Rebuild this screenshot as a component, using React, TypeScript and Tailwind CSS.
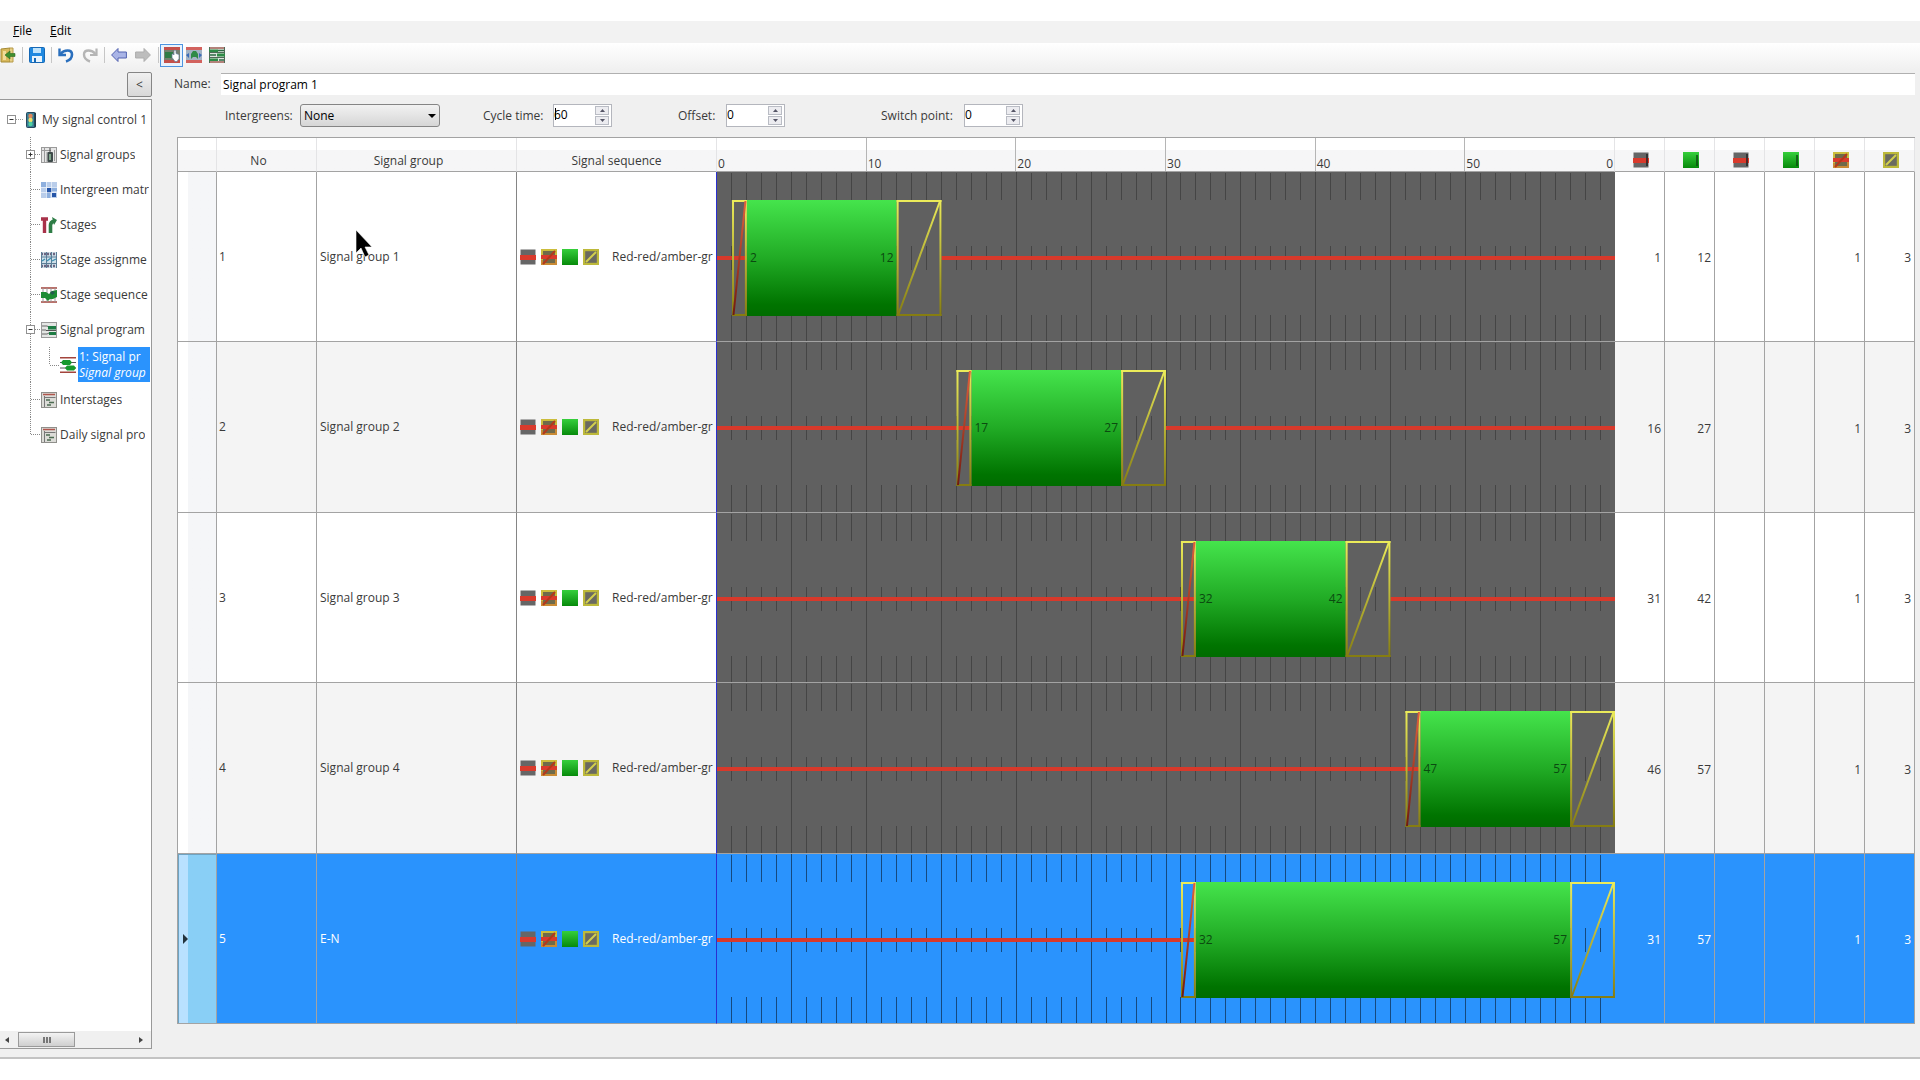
import { ReactNode } from "react";
import clsx from "clsx";

const CYCLE = 60;
const BAR_TOP = 28;
const BAR_BOTTOM = 144;

type Group = { no: number; name: string; start: number; green: number; end: number; amberEnd: number };

const groups: Group[] = [
  { no: 1, name: "Signal group 1", start: 1, green: 2, end: 12, amberEnd: 15 },
  { no: 2, name: "Signal group 2", start: 16, green: 17, end: 27, amberEnd: 30 },
  { no: 3, name: "Signal group 3", start: 31, green: 32, end: 42, amberEnd: 45 },
  { no: 4, name: "Signal group 4", start: 46, green: 47, end: 57, amberEnd: 60 },
  { no: 5, name: "E-N", start: 31, green: 32, end: 57, amberEnd: 60 },
];

const pct = (t: number) => `${(t / CYCLE) * 100}%`;

function Icon({ children }: { children: ReactNode }) {
  return (
    <svg viewBox="0 0 16 16" className="size-4 shrink-0" aria-hidden="true">
      {children}
    </svg>
  );
}

/* signal state icons */

function RedIcon({ edge }: { edge?: boolean }) {
  return (
    <Icon>
      <rect x="0.5" y="0.5" width="15" height="15" fill="#666" />
      <rect x="0" y="6" width="16" height="5" fill="#d93a2c" />
      {edge && <path d="M14 2v12" stroke="#222" strokeWidth="1.5" />}
    </Icon>
  );
}

function RedAmberIcon() {
  return (
    <Icon>
      <rect x="1" y="1" width="14" height="14" fill="#6f6a4a" stroke="#ccbd3c" strokeWidth="2" />
      <path d="M15 6v9H1v-4" fill="none" stroke="#c98a34" strokeWidth="2" />
      <rect x="0" y="6" width="16" height="4" fill="#d93a2c" />
      <path d="M2 15L14 2" stroke="#b5381c" strokeWidth="2" />
    </Icon>
  );
}

function GreenIcon({ edge }: { edge?: boolean }) {
  return (
    <Icon>
      <defs>
        <linearGradient id="greenIcon" x1="0" y1="0" x2="0" y2="1">
          <stop offset="0" stopColor="#35cf3b" />
          <stop offset="1" stopColor="#078a0b" />
        </linearGradient>
      </defs>
      <rect width="16" height="16" fill="url(#greenIcon)" />
      {edge && <path d="M14 3v11" stroke="#0b4a10" strokeWidth="1.5" />}
    </Icon>
  );
}

function AmberIcon() {
  return (
    <Icon>
      <rect x="1" y="1" width="14" height="14" fill="#6a6a60" stroke="#bdb93a" strokeWidth="2.4" />
      <path d="M3 13L13 3" stroke="#d2cf4c" strokeWidth="2" />
    </Icon>
  );
}

/* toolbar icons */

function ExitIcon() {
  return (
    <Icon>
      <path d="M1 2l9-1v14l-9 0z" fill="#d9b95c" stroke="#a58a35" />
      <path d="M10 1h3v14h-3" fill="#e6cf85" stroke="#b79a48" />
      <path d="M3 4h3v9H3z" fill="#f0dc98" />
      <path d="M5 8l5-4v2.500h5v3h-5V12z" fill="#3f8f2f" stroke="#2c6b22" strokeWidth="0.6" />
    </Icon>
  );
}

function SaveIcon() {
  return (
    <Icon>
      <rect x="0.5" y="0.5" width="15" height="15" rx="1" fill="#2089e0" stroke="#1668b5" />
      <rect x="4" y="1" width="8" height="5" fill="#bfe3fb" />
      <rect x="3" y="9" width="10" height="6" fill="#e9f4fc" />
      <rect x="5" y="11" width="2" height="4" fill="#1668b5" />
    </Icon>
  );
}

function UndoIcon() {
  return (
    <Icon>
      <path d="M2.500 7C6 2.500 14 2 14 7.500C14 11 11 13.500 8 14.500" fill="none" stroke="#2a6fbd" strokeWidth="2.6" />
      <path d="M1.500 1.500V8H8" fill="none" stroke="#2a6fbd" strokeWidth="2.4" />
    </Icon>
  );
}

function RedoIcon() {
  return (
    <Icon>
      <path d="M13.500 7C10 2.500 2 2 2 7.500C2 11 5 13.500 8 14.500" fill="none" stroke="#b5b5b5" strokeWidth="2.4" />
      <path d="M14.500 1.500V8H8" fill="none" stroke="#b5b5b5" strokeWidth="2.2" />
    </Icon>
  );
}

function BackIcon() {
  return (
    <Icon>
      <path d="M0.600 8L7 1.500V5h8.400v6H7v3.500z" fill="#a9b4e6" stroke="#5262b0" />
    </Icon>
  );
}

function ForwardIcon() {
  return (
    <Icon>
      <path d="M15.400 8L9 1.500V5H0.600v6H9v3.500z" fill="#bdbdbd" stroke="#adadad" />
    </Icon>
  );
}

function ProgramViewIcon() {
  return (
    <Icon>
      <rect width="16" height="16" fill="#75806f" />
      <path d="M0 1.500h16M0 14.500h16" stroke="#c4504a" strokeWidth="3" />
      <rect x="1" y="5" width="8" height="6" fill="#2e7d46" />
      <path d="M8 7l1 0 1 1V3.500l1-0.500 1 0.500v3l3 1v4l-2 3h-2l-3-4z" fill="#fff" stroke="#66809c" strokeWidth="0.7" />
    </Icon>
  );
}

function StageViewIcon() {
  return (
    <Icon>
      <rect width="16" height="16" fill="#a3b3c4" />
      <path d="M0 1.500h16M0 14.500h16" stroke="#d2625e" strokeWidth="3" />
      <path d="M5 12V7l2-3h3l2 3v5l-2-2H7z" fill="#2e8b46" />
      <path d="M0 8l3-2v5zM16 8l-3-2v5z" fill="#3a6cb8" />
    </Icon>
  );
}

function SplitViewIcon() {
  return (
    <Icon>
      <rect width="16" height="16" fill="#dfe7df" />
      <path d="M0 1h16M0 15h16" stroke="#a5625a" strokeWidth="1.500" />
      <path d="M0.500 0v16M15.500 0v16M0 5.500h16M0 10.500h16" stroke="#4f6a57" />
      <path d="M0 2.500h9v2.500H0zM8 6.500h8v3H8zM0 11.500h9v2.500H0z" fill="#2e8b46" />
      <path d="M9 3.500h6M1 8h6M10 13h5" stroke="#2e6b46" strokeWidth="1.400" />
    </Icon>
  );
}

/* tree icons */

function ControllerIcon() {
  return (
    <svg viewBox="0 0 10 16" className="h-4 w-[10px] shrink-0" aria-hidden="true">
      <rect x="0.5" y="0.5" width="9" height="15" rx="1" fill="#3a7f96" stroke="#28485c" />
      <path d="M9 1v14" stroke="#1f3340" strokeWidth="1.500" />
      <circle cx="4.500" cy="4" r="2.2" fill="#e0865a" />
      <circle cx="4.500" cy="8" r="2.2" fill="#efe06a" />
      <circle cx="4.500" cy="12" r="2.2" fill="#4fd0a0" />
    </svg>
  );
}

function SignalGroupsIcon() {
  return (
    <Icon>
      <rect x="0.5" y="0.5" width="15" height="15" fill="#e6e6e6" stroke="#9a9a9a" />
      <path d="M0 3.500h10M3.500 1v14M6 5v10M13.500 3v11" stroke="#9a9a9a" />
      <rect x="6.500" y="5" width="5.500" height="10" rx="1" fill="#3e4a4a" />
      <rect x="8" y="7" width="2" height="6" fill="#7fa58a" />
      <path d="M9 1v4" stroke="#444" />
    </Icon>
  );
}

function MatrixIcon() {
  return (
    <Icon>
      <rect width="16" height="16" fill="#b9cdea" />
      <path d="M0 0h5v5H0zM10 5h6v4h-6zM5 11h4v5H5z" fill="#8fb0de" />
      <path d="M6 6h5v5H6zM11 11h4v4h-4z" fill="#2555a8" />
      <path d="M0 5.500h16M0 10.500h16M5.500 0v16M10.500 0v16" stroke="#f2f6fc" strokeWidth="0.7" />
    </Icon>
  );
}

function StagesIcon() {
  return (
    <Icon>
      <path d="M0 2h7M3.500 2v14" stroke="#a8324a" strokeWidth="3.4" />
      <path d="M9.500 16V8q0-3 4-4" fill="none" stroke="#2e7d46" strokeWidth="3.6" />
      <path d="M11 0l5 3-3 5z" fill="#2e7d46" />
    </Icon>
  );
}

function AssignmentIcon() {
  return (
    <Icon>
      <rect width="16" height="16" fill="#cfe0ea" />
      <path d="M0 2h16M0 14h16" stroke="#6d6480" strokeWidth="2.500" strokeDasharray="2 1" />
      <path d="M0.500 0v16M5.500 0v16M10.500 0v16M15.500 0v16M0 5h16M0 11.500h16" stroke="#5b7d97" />
      <path d="M1 9l3-2M6 9l4-3M11 9l4-2" stroke="#3a8fb0" strokeWidth="1.300" />
    </Icon>
  );
}

function SequenceIcon() {
  return (
    <Icon>
      <path d="M0 1h16M0 15h16" stroke="#a3443c" strokeWidth="1.500" />
      <path d="M2 1v14M6 1v14M10 1v14M14 1v14" stroke="#999" />
      <path d="M0 5h5l3 2 3-3 5-1v7l-4 2H9l-2 2-3-3H0z" fill="#1d8c34" />
      <path d="M9 5l3-1 2 2-3 2z" fill="#245c4e" />
    </Icon>
  );
}

function ProgramsIcon() {
  return (
    <Icon>
      <rect x="0.5" y="0.5" width="15" height="15" fill="#e4e6e4" stroke="#999" />
      <path d="M1 4h5l2 1M1 8h4M1 12h5l2-1" stroke="#666" fill="none" />
      <path d="M7 4h8v3.500H7zM8 10h7v3H8z" fill="#1d7c44" />
      <path d="M5 8.500h10" stroke="#555" />
    </Icon>
  );
}

function ProgramIcon() {
  return (
    <Icon>
      <path d="M0 0.800h16M0 15.200h16" stroke="#a3443c" strokeWidth="1.500" />
      <path d="M0 5.500h16M0 11h16" stroke="#555" />
      <path d="M1 5.500l2-2.500h7l2 2.500-2 2.500H3zM5 11l2-2.500h7l2 2.500-2 2.500H7z" fill="#169a2c" />
    </Icon>
  );
}

function InterstageIcon() {
  return (
    <Icon>
      <rect x="0.5" y="0.5" width="15" height="15" fill="#dcdcd8" stroke="#8f8f8b" />
      <path d="M2 2.500h12" stroke="#b0554c" strokeWidth="1.500" />
      <path d="M3.500 4v11M3.500 5.500h11" stroke="#777" />
      <path d="M5 8h4M8 10.500h5M6 13h4" stroke="#4c6b52" strokeWidth="1.500" />
    </Icon>
  );
}

const tree = [
  { label: "Signal groups", icon: <SignalGroupsIcon />, expander: "+" },
  { label: "Intergreen matr", icon: <MatrixIcon /> },
  { label: "Stages", icon: <StagesIcon /> },
  { label: "Stage assignme", icon: <AssignmentIcon /> },
  { label: "Stage sequence", icon: <SequenceIcon /> },
  { label: "Signal program", icon: <ProgramsIcon />, expander: "-" },
  { label: "1: Signal pr", sub: "Signal group", icon: <ProgramIcon />, selected: true },
  { label: "Interstages", icon: <InterstageIcon /> },
  { label: "Daily signal pro", icon: <InterstageIcon />, last: true },
];

function Expander({ x, sign }: { x: number; sign: string }) {
  return (
    <g>
      <rect x={x - 4} y="13.5" width="8" height="8" fill="#fff" stroke="#919191" />
      <path d={`M${x - 2} 17.5h4`} stroke="#333" />
      {sign === "+" && <path d={`M${x} 15.500v4`} stroke="#333" />}
    </g>
  );
}

function Tree() {
  return (
    <ul className="flex-1 pt-[2px]">
      <li className="flex h-[35px] items-center">
        <svg className="h-[35px] w-[26px] shrink-0" aria-hidden="true">
          <path d="M16 17.5h7" stroke="#999" strokeDasharray="1 1" />
          <Expander x={11.5} sign="-" />
        </svg>
        <ControllerIcon />
        <span className="ml-[6px]">My signal control 1</span>
      </li>
      {tree.map((item) => (
        <li key={item.label} className="flex h-[35px] items-center">
          <svg className={clsx("h-[35px] shrink-0", item.selected ? "w-[60px]" : "w-[41px]")} aria-hidden="true">
            <path d={item.last ? "M30.5 0v18" : "M30.5 0v35"} stroke="#888" strokeDasharray="1 1" />
            {item.selected ? (
              <path d="M49.5 0v18M50 18.5h9" stroke="#888" strokeDasharray="1 1" fill="none" />
            ) : (
              <path d="M31 17.500h10" stroke="#888" strokeDasharray="1 1" />
            )}
            {item.expander && <Expander x={30.5} sign={item.expander} />}
          </svg>
          {item.icon}
          {item.selected ? (
            <span className="ml-[2px] flex h-[35px] w-[72px] flex-col justify-center bg-[#2a93fd] pl-px leading-4 text-white">
              <span>{item.label}</span>
              <i>{item.sub}</i>
            </span>
          ) : (
            <span className="ml-[3px] overflow-hidden">{item.label}</span>
          )}
        </li>
      ))}
    </ul>
  );
}

function Spin({ id, label, value, caret }: { id: string; label: string; value: string; caret?: boolean }) {
  return (
    <>
      <label htmlFor={id} className="shrink-0">
        {label}
      </label>
      <div className="relative flex h-[23px] w-[59px] items-center border border-[#b4b6bd] bg-white pr-[2px]">
        <input id={id} defaultValue={value} className="h-full w-full min-w-0 pb-[2px] text-black outline-none" />
        {caret && <span className="absolute top-[3px] left-px h-3 w-px bg-black" />}
        <div className="flex shrink-0 flex-col gap-px">
          <button aria-label={`Increase ${id}`} className="flex h-[9px] w-[14px] items-center justify-center border border-[#b9bcc4] bg-[#ececf0]">
            <svg viewBox="0 0 5 3" className="h-[3px] w-[5px]"><path d="M0 3L2.500 0L5 3z" fill="#556" /></svg>
          </button>
          <button aria-label={`Decrease ${id}`} className="flex h-[9px] w-[14px] items-center justify-center border border-[#b9bcc4] bg-[#ececf0]">
            <svg viewBox="0 0 5 3" className="h-[3px] w-[5px]"><path d="M0 0L2.500 3L5 0z" fill="#556" /></svg>
          </button>
        </div>
      </div>
    </>
  );
}

function Timeline({ group, selected, tall }: { group: Group; selected: boolean; tall: boolean }) {
  const { start, green, end, amberEnd } = group;
  const ticks = Array.from({ length: CYCLE - 1 }, (_, i) => i + 1);
  const back = selected ? "#2a93fd" : "#606060";
  const tickOpacity = selected ? 0.5 : 0.28;
  return (
    <svg className={clsx("block w-full", tall ? "h-[170px]" : "h-[169px]", selected ? "bg-[#2a93fd]" : "bg-[#606060]")}>
      <g stroke="#000" strokeOpacity={tickOpacity} shapeRendering="crispEdges">
        {ticks.map((t) =>
          t % 5 === 0 ? (
            <line key={t} x1={pct(t)} x2={pct(t)} y1="0" y2="100%" />
          ) : (
            <g key={t}>
              <line x1={pct(t)} x2={pct(t)} y1="1" y2="28" />
              <line x1={pct(t)} x2={pct(t)} y1="143" y2="100%" />
            </g>
          ),
        )}
      </g>
      <rect x={pct(start)} y={BAR_TOP} width={pct(amberEnd - start)} height={BAR_BOTTOM - BAR_TOP} fill={back} />
      <g stroke="#000" strokeOpacity={tickOpacity} shapeRendering="crispEdges">
        {ticks.filter((t) => t % 5 !== 0).map((t) => (
          <line key={t} x1={pct(t)} x2={pct(t)} y1="74" y2="98" />
        ))}
      </g>
      <line x1="0" x2={pct(green)} y1="86" y2="86" stroke="#d8392b" strokeWidth="4" />
      <line x1={pct(amberEnd)} x2="100%" y1="86" y2="86" stroke="#d8392b" strokeWidth="4" />
      <rect x={pct(green)} y={BAR_TOP} width={pct(end - green)} height={BAR_BOTTOM - BAR_TOP} fill="url(#greenBar)" />
      <g stroke="url(#amberLine)" strokeWidth="2">
        <line x1={pct(start)} x2={pct(green)} y1="29" y2="29" />
        <line x1={pct(start)} x2={pct(green)} y1="143" y2="143" />
        <line x1={pct(start + 0.07)} x2={pct(start + 0.071)} y1="28" y2="144" />
        <line x1={pct(green - 0.07)} x2={pct(green - 0.069)} y1="28" y2="144" />
        <line x1={pct(end)} x2={pct(amberEnd)} y1="29" y2="29" />
        <line x1={pct(end)} x2={pct(amberEnd)} y1="143" y2="143" />
        <line x1={pct(end + 0.07)} x2={pct(end + 0.071)} y1="28" y2="144" />
        <line x1={pct(amberEnd - 0.07)} x2={pct(amberEnd - 0.069)} y1="28" y2="144" />
        <line x1={pct(end + 0.1)} x2={pct(amberEnd - 0.1)} y1="143" y2="29" />
      </g>
      <line x1={pct(start + 0.1)} x2={pct(green - 0.1)} y1="143" y2="29" stroke="url(#redLine)" strokeWidth="2" />
      <text x={pct(green)} dx="3" y="90" fill="#0b4a10">{green}</text>
      <text x={pct(end)} dx="-3" y="90" textAnchor="end" fill="#0b4a10">{end}</text>
    </svg>
  );
}

function Row({ group, index }: { group: Group; index: number }) {
  const selected = group.no === 5;
  const tall = index % 2 === 1;
  const cell = clsx("border-b border-[#a3a3a3] p-0", selected ? "bg-[#2a93fd] text-white" : tall ? "bg-[#f4f4f4]" : "bg-white");
  return (
    <tr>
      <td
        className={clsx(
          "border-r border-b border-[#a3a3a3] p-0",
          selected
            ? "bg-linear-to-r from-[#b9e1ff] from-25% to-[#89cff6] to-25% shadow-[inset_1px_1px_0_#6ea3c2]"
            : "bg-linear-to-r from-white from-25% to-[#f5f6f8] to-25%",
        )}
      >
        {selected && (
          <svg viewBox="0 0 5 10" className="ml-[5px] h-[10px] w-[5px]" aria-hidden="true">
            <path d="M0 0L5 5L0 10z" fill="#23333d" />
          </svg>
        )}
      </td>
      <td className={clsx(cell, "border-r pl-[2px]")}>{group.no}</td>
      <td className={clsx(cell, "border-r border-r-[#858585] pl-[3px]")}>{group.name}</td>
      <td className={clsx(cell, "border-r border-r-[#2a2fd0] pl-[3px]")}>
        <div className="flex items-center overflow-hidden whitespace-nowrap">
          <div className="flex gap-[5px]">
            <RedIcon />
            <RedAmberIcon />
            <GreenIcon />
            <AmberIcon />
          </div>
          <span className="ml-[13px]">Red-red/amber-gr</span>
        </div>
      </td>
      <td className="border-b border-[#a3a3a3] p-0">
        <Timeline group={group} selected={selected} tall={tall} />
      </td>
      {[group.start, group.end, "", "", 1, 3].map((value, i) => (
        <td key={i} className={clsx(cell, "border-r pt-[3px] pr-[3px] text-right")}>
          {value}
        </td>
      ))}
    </tr>
  );
}

const headCell = "border-b border-r border-b-[#a3a3a3] border-r-[#e4e4e6] bg-linear-to-b from-white from-35% to-[#f6f6f7] to-35% p-0 font-normal";

function ProgramTable() {
  const stateIcons = [<RedIcon edge />, <GreenIcon edge />, <RedIcon edge />, <GreenIcon edge />, <RedAmberIcon />, <AmberIcon />];
  return (
    <table className="w-full table-fixed border-separate border-spacing-0 border-t border-l border-[#a3a3a3]">
      <colgroup>
        <col className="w-[39px]" />
        <col className="w-[100px]" />
        <col className="w-[200px]" />
        <col className="w-[200px]" />
        <col />
        {stateIcons.map((_, i) => (
          <col key={i} className="w-[50px]" />
        ))}
      </colgroup>
      <thead>
        <tr className="h-[34px]">
          <th className={clsx(headCell, "border-r-[#a3a3a3]")} />
          <th className={clsx(headCell, "pt-3 pr-4")}>No</th>
          <th className={clsx(headCell, "pt-3 pr-4")}>Signal group</th>
          <th className={clsx(headCell, "border-r-[#2a2fd0] pt-3")}>Signal sequence</th>
          <th className={headCell}>
            <div className="flex h-[33px]">
              {[0, 10, 20, 30, 40, 50].map((t) => (
                <span key={t} className={clsx("flex flex-1 items-end justify-between leading-[14px]", t > 0 && "border-l border-[#b5b5b5]")}>
                  <span className="pl-px">{t}</span>
                  {t === 50 && <span className="pr-px">0</span>}
                </span>
              ))}
            </div>
          </th>
          {stateIcons.map((icon, i) => (
            <th key={i} className={clsx(headCell, "pt-[11px] pl-[2px]")}>
              <span className="flex justify-center">{icon}</span>
            </th>
          ))}
        </tr>
      </thead>
      <tbody>
        {groups.map((group, i) => (
          <Row key={group.no} group={group} index={i} />
        ))}
      </tbody>
    </table>
  );
}

function Separator() {
  return <span className="mx-[6px] h-4 w-px bg-[#c6c6c6]" />;
}

export default function App() {
  return (
    <div className="relative flex min-h-screen flex-col bg-white pt-[21px] pb-[21px] font-['Open_Sans','Noto_Sans',sans-serif] text-[12px] leading-4 text-[#3a3a3a]">
      <svg className="size-0" aria-hidden="true">
        <defs>
          <linearGradient id="greenBar" x1="0" y1="0" x2="0" y2="1">
            <stop offset="0" stopColor="#45e44c" />
            <stop offset="0.5" stopColor="#21ab25" />
            <stop offset="0.9" stopColor="#007400" />
            <stop offset="1" stopColor="#006c00" />
          </linearGradient>
          <linearGradient id="amberLine" gradientUnits="userSpaceOnUse" x1="0" y1={BAR_TOP} x2="0" y2={BAR_BOTTOM}>
            <stop offset="0" stopColor="#ecec5a" />
            <stop offset="1" stopColor="#857c10" />
          </linearGradient>
          <linearGradient id="redLine" gradientUnits="userSpaceOnUse" x1="0" y1={BAR_TOP} x2="0" y2={BAR_BOTTOM}>
            <stop offset="0" stopColor="#e2603c" />
            <stop offset="1" stopColor="#701a10" />
          </linearGradient>
        </defs>
      </svg>

      <nav className="flex h-[22px] items-center gap-[18px] bg-[#f2f2f2] pb-[2px] pl-[13px] text-black">
        <button><u>F</u>ile</button>
        <button><u>E</u>dit</button>
      </nav>

      <div className="flex h-[27px] items-center bg-linear-to-b from-white to-[#f0f0f0] pb-[3px]">
        <button aria-label="Exit"><ExitIcon /></button>
        <Separator />
        <button aria-label="Save"><SaveIcon /></button>
        <Separator />
        <button aria-label="Undo"><UndoIcon /></button>
        <button aria-label="Redo" className="ml-2"><RedoIcon /></button>
        <Separator />
        <button aria-label="Back"><BackIcon /></button>
        <button aria-label="Forward" className="ml-2"><ForwardIcon /></button>
        <span className="ml-[7px] h-4 w-px bg-[#c6c6c6]" />
        <button aria-label="Signal group view" className="ml-px flex h-[23px] w-[23px] items-center justify-center border border-[#4d94e0] bg-[#e8f2fc]">
          <ProgramViewIcon />
        </button>
        <button aria-label="Stage view" className="ml-[3px]"><StageViewIcon /></button>
        <button aria-label="Split view" className="ml-[7px]"><SplitViewIcon /></button>
      </div>

      <div className="flex flex-1 border-b-2 border-[#c3c3c3] bg-[#f0f0f0]">
        <aside className="flex w-[152px] shrink-0 flex-col pb-2">
          <div className="flex h-[29px] justify-end pt-[2px]">
            <button className="h-[25px] w-[25px] rounded-[2px] border border-[#858585] bg-linear-to-b from-[#f0f0f0] to-[#d8d8d8]">&lt;</button>
          </div>
          <div className="flex flex-1 flex-col border-t border-r border-b border-[#999] bg-white whitespace-nowrap">
            <Tree />
            <div className="flex h-[17px] items-center justify-between bg-[#f0f0f0] pr-2 pl-[5px]">
              <svg viewBox="0 0 4 6" className="h-[6px] w-1"><path d="M4 0L0 3L4 6z" fill="#444" /></svg>
              <div className="mr-auto ml-[9px] flex h-[15px] w-[57px] items-center justify-center gap-px border border-[#9a9a9a] bg-linear-to-b from-[#f3f3f3] to-[#cfcfcf]">
                <span className="h-[6px] w-[2px] bg-[#777]" />
                <span className="h-[6px] w-[2px] bg-[#777]" />
                <span className="h-[6px] w-[2px] bg-[#777]" />
              </div>
              <svg viewBox="0 0 4 6" className="h-[6px] w-1"><path d="M0 0L4 3L0 6z" fill="#444" /></svg>
            </div>
          </div>
        </aside>

        <main className="min-w-0 flex-1 pt-[3px] pr-[5px]">
          <div className="flex h-[22px] items-center pl-[22px]">
            <label htmlFor="name" className="w-[47px] shrink-0">Name:</label>
            <input id="name" defaultValue="Signal program 1" className="h-full min-w-0 flex-1 border-t border-[#b0b0b0] bg-white pl-[2px] text-black outline-none" />
          </div>

          <div className="mt-[9px] flex h-[23px] items-center pl-[73px]">
            <div className="grid grid-cols-[75px_140px] items-center">
              <label htmlFor="intergreens">Intergreens:</label>
              <div className="relative">
                <select id="intergreens" className="h-[23px] w-full appearance-none rounded-[3px] border border-[#858585] bg-linear-to-b from-[#f2f2f2] to-[#d6d6d6] pl-[3px] text-black">
                  <option>None</option>
                </select>
                <svg viewBox="0 0 8 4" className="pointer-events-none absolute top-[10px] right-[4px] h-1 w-2"><path d="M0 0H8L4 4z" fill="#000" /></svg>
              </div>
            </div>
            <div className="ml-[43px] grid grid-cols-[70px_59px] items-center">
              <Spin id="cycle-time" label="Cycle time:" value="60" caret />
            </div>
            <div className="ml-[66px] grid grid-cols-[48px_59px] items-center">
              <Spin id="offset" label="Offset:" value="0" />
            </div>
            <div className="ml-[96px] grid grid-cols-[83px_59px] items-center">
              <Spin id="switch-point" label="Switch point:" value="0" />
            </div>
          </div>

          <div className="mt-[10px] pl-[25px]">
            <ProgramTable />
          </div>
        </main>
      </div>

      {/* pointer */}
      <svg viewBox="0 0 18 30" className="pointer-events-none absolute top-[229px] left-[355px] h-[30px] w-[18px]" aria-hidden="true">
        <path d="M1 1V24L6 19L10 28L14 26L10 18H17z" fill="#000" stroke="#fff" strokeWidth="0.6" />
      </svg>
    </div>
  );
}
